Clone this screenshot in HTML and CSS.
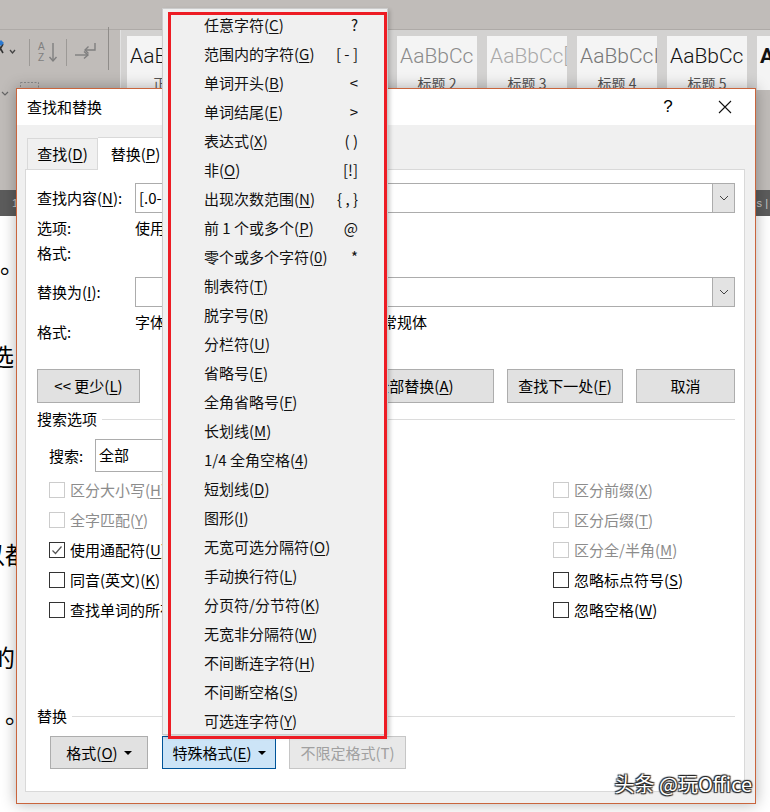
FILE: index.html
```html
<!DOCTYPE html>
<html lang="zh-CN">
<head>
    <meta charset="UTF-8">
    <title>查找和替换</title>
    <link rel="stylesheet" href="styles.css">
</head>
<body>
    <div class="ribbon">
        <div class="ribbon-top"></div>
        <div class="ribbon-body">
            <div class="tools">
                <svg width="120" height="60" viewBox="0 0 120 60">
                    <path d="M-2 14 L3 23 M3 14 L-2 23" stroke="#333" stroke-width="1.6" fill="none"/>
                    <path d="M1 10 L4 13 L1 16 L-2 13 Z" fill="#2b79d0"/>
                    <polyline points="10,20 12.5,23 15,20" stroke="#444" stroke-width="1.3" fill="none"/>
                    <line x1="29.5" y1="9" x2="29.5" y2="36" stroke="#9c9996"/>
                    <text x="38" y="20" font-size="10" fill="#7f7f7f" font-family="Liberation Sans">A</text>
                    <text x="38" y="31" font-size="10" fill="#7f7f7f" font-family="Liberation Sans">Z</text>
                    <line x1="53" y1="13" x2="53" y2="31" stroke="#7f7f7f" stroke-width="1.4"/>
                    <polyline points="49.5,27 53,31 56.5,27" stroke="#7f7f7f" stroke-width="1.4" fill="none"/>
                    <line x1="66.5" y1="9" x2="66.5" y2="36" stroke="#9c9996"/>
                    <line x1="75" y1="25" x2="88" y2="25" stroke="#7f7f7f" stroke-width="1.4"/>
                    <polyline points="84,21.5 88,25 84,28.5" stroke="#7f7f7f" stroke-width="1.4" fill="none"/>
                    <polyline points="95,13 95,20 85,20" stroke="#7f7f7f" stroke-width="1.4" fill="none"/>
                    <polyline points="88.5,16.5 85,20 88.5,23.5" stroke="#7f7f7f" stroke-width="1.4" fill="none"/>
                    <line x1="108.5" y1="-3" x2="108.5" y2="40" stroke="#8f8c89"/>
                    <rect x="20.5" y="52.5" width="18" height="7" stroke="#8a8a8a" stroke-dasharray="2 1.5" fill="none"/>
                </svg>
            </div>
            <div class="gallery">
                <div class="style-box"><span class="sample">AaBbCcDd</span><span class="style-name">正文</span></div>
                <div class="style-box"><span class="sample">AaBbCcDd</span><span class="style-name">无间隔</span></div>
                <div class="style-box"><span class="sample bold">AaBb</span><span class="style-name">标题 1</span></div>
                <div class="style-box"><span class="sample gray">AaBbCc</span><span class="style-name">标题 2</span></div>
                <div class="style-box"><span class="sample light">AaBbCc[</span><span class="style-name">标题 3</span></div>
                <div class="style-box"><span class="sample mid">AaBbCcI</span><span class="style-name">标题 4</span></div>
                <div class="style-box"><span class="sample">AaBbCc</span><span class="style-name">标题 5</span></div>
                <div class="style-box"><span class="sample bold">AaB</span><span class="style-name">标题</span></div>
            </div>
        </div>
    </div>

    <div class="workspace">
        <div class="gray-band">
            <svg class="band-chevron" width="10" height="6" viewBox="0 0 10 6"><polyline points="1,1 4,4 7,1" stroke="#666" stroke-width="1.2" fill="none"/></svg>
        </div>
        <div class="ruler"><span>1:</span><span>s |</span></div>
        <div class="doc">
            <div class="doc-line l1">。</div>
            <div class="doc-line l2">选</div>
            <div class="doc-line l3">以都</div>
            <div class="doc-line l4">的</div>
            <div class="doc-line l5">。</div>
        </div>
    </div>

    <div class="dialog">
        <div class="title-bar">
            <span class="title">查找和替换</span>
            <span class="title-btn">?</span>
            <span class="title-btn">
                <svg width="14" height="14" viewBox="0 0 14 14"><path d="M1 1 L13 13 M13 1 L1 13" stroke="#111" stroke-width="1.1"/></svg>
            </span>
        </div>
        <div class="dialog-body">
            <div class="tabs">
                <div class="tab"><span>查找(<u>D</u>)</span></div>
                <div class="tab active"><span>替换(<u>P</u>)</span></div>
            </div>
            <div class="panel">
                <div class="field-row">
                    <span class="label">查找内容(<u>N</u>):</span>
                    <div class="combo">
                        <span class="combo-text">[.0-9]{1,}</span>
                        <span class="combo-btn"><svg width="10" height="6" viewBox="0 0 10 6"><polyline points="1,1 5,5 9,1" stroke="#444" stroke-width="1" fill="none"/></svg></span>
                    </div>
                </div>
                <div class="info-row first">
                    <span class="label">选项:</span>
                    <span class="value">使用通配符</span>
                </div>
                <div class="info-row">
                    <span class="label">格式:</span>
                </div>
                <div class="field-row replace">
                    <span class="label">替换为(<u>I</u>):</span>
                    <div class="combo">
                        <span class="combo-text"></span>
                        <span class="combo-btn"><svg width="10" height="6" viewBox="0 0 10 6"><polyline points="1,1 5,5 9,1" stroke="#444" stroke-width="1" fill="none"/></svg></span>
                    </div>
                </div>
                <div class="format-row">
                    <span class="label">格式:</span>
                    <span class="value">字体: (中文) +中文正文, 宋体, 加粗, 非常规体</span>
                </div>
                <div class="button-row">
                    <button class="btn less"><span>&lt;&lt; 更少(<u>L</u>)</span></button>
                    <span class="spacer"></span>
                    <button class="btn w-replace"><span>替换(<u>R</u>)</span></button>
                    <button class="btn w-all"><span>全部替换(<u>A</u>)</span></button>
                    <button class="btn w-next"><span>查找下一处(<u>F</u>)</span></button>
                    <button class="btn w-cancel"><span>取消</span></button>
                </div>
                <div class="legend">
                    <span>搜索选项</span>
                    <span class="legend-line"></span>
                </div>
                <div class="search-row">
                    <span class="search-label">搜索:</span>
                    <div class="select">全部</div>
                </div>
                <div class="options">
                    <div class="check disabled"><span class="box"></span><span>区分大小写(<u>H</u>)</span></div>
                    <div class="check disabled"><span class="box"></span><span>区分前缀(<u>X</u>)</span></div>
                    <div class="check disabled"><span class="box"></span><span>全字匹配(<u>Y</u>)</span></div>
                    <div class="check disabled"><span class="box"></span><span>区分后缀(<u>T</u>)</span></div>
                    <div class="check"><span class="box"><svg width="14" height="14" viewBox="0 0 14 14"><polyline points="2.5,7.5 5.5,10.5 11.5,3.5" stroke="#555" stroke-width="1.2" fill="none"/></svg></span><span>使用通配符(<u>U</u>)</span></div>
                    <div class="check disabled"><span class="box"></span><span>区分全/半角(<u>M</u>)</span></div>
                    <div class="check"><span class="box"></span><span>同音(英文)(<u>K</u>)</span></div>
                    <div class="check"><span class="box"></span><span>忽略标点符号(<u>S</u>)</span></div>
                    <div class="check"><span class="box"></span><span>查找单词的所有形式(英文)(<u>W</u>)</span></div>
                    <div class="check"><span class="box"></span><span>忽略空格(<u>W</u>)</span></div>
                </div>
                <div class="legend replace-legend">
                    <span>替换</span>
                    <span class="legend-line"></span>
                </div>
                <div class="bottom-row">
                    <button class="btn b-format"><span>格式(<u>O</u>)</span><span class="caret"></span></button>
                    <button class="btn b-special pressed"><span>特殊格式(<u>E</u>)</span><span class="caret"></span></button>
                    <button class="btn b-none" disabled><span>不限定格式(T)</span></button>
                </div>
            </div>
        </div>
    </div>

    <div class="menu">
        <div class="menu-item"><span>任意字符(<u>C</u>)</span><span>?</span></div>
        <div class="menu-item"><span>范围内的字符(<u>G</u>)</span><span>[ - ]</span></div>
        <div class="menu-item"><span>单词开头(<u>B</u>)</span><span>&lt;</span></div>
        <div class="menu-item"><span>单词结尾(<u>E</u>)</span><span>&gt;</span></div>
        <div class="menu-item"><span>表达式(<u>X</u>)</span><span>( )</span></div>
        <div class="menu-item"><span>非(<u>O</u>)</span><span>[!]</span></div>
        <div class="menu-item"><span>出现次数范围(<u>N</u>)</span><span>{ , }</span></div>
        <div class="menu-item"><span>前 1 个或多个(<u>P</u>)</span><span>@</span></div>
        <div class="menu-item"><span>零个或多个字符(<u>0</u>)</span><span>*</span></div>
        <div class="menu-item"><span>制表符(<u>T</u>)</span></div>
        <div class="menu-item"><span>脱字号(<u>R</u>)</span></div>
        <div class="menu-item"><span>分栏符(<u>U</u>)</span></div>
        <div class="menu-item"><span>省略号(<u>E</u>)</span></div>
        <div class="menu-item"><span>全角省略号(<u>F</u>)</span></div>
        <div class="menu-item"><span>长划线(<u>M</u>)</span></div>
        <div class="menu-item"><span>1/4 全角空格(<u>4</u>)</span></div>
        <div class="menu-item"><span>短划线(<u>D</u>)</span></div>
        <div class="menu-item"><span>图形(<u>I</u>)</span></div>
        <div class="menu-item"><span>无宽可选分隔符(<u>O</u>)</span></div>
        <div class="menu-item"><span>手动换行符(<u>L</u>)</span></div>
        <div class="menu-item"><span>分页符/分节符(<u>K</u>)</span></div>
        <div class="menu-item"><span>无宽非分隔符(<u>W</u>)</span></div>
        <div class="menu-item"><span>不间断连字符(<u>H</u>)</span></div>
        <div class="menu-item"><span>不间断空格(<u>S</u>)</span></div>
        <div class="menu-item"><span>可选连字符(<u>Y</u>)</span></div>
    </div>

    <div class="mark"></div>

    <div class="watermark">头条 @玩Office</div>
</body>
</html>
```

FILE: styles.css
```css
* {
    box-sizing: border-box;
}

body {
    margin: 0;
    width: 770px;
    height: 812px;
    overflow: hidden;
    position: relative;
    background: #fff;
    color: #000;
    font-family: "Noto Sans CJK SC", sans-serif;
    font-size: 15px;
}

u {
    text-decoration-thickness: 1px;
    text-underline-offset: 2px;
}

/* ribbon */
.ribbon {
    height: 90px;
    background: #c0bcb9;
    overflow: hidden;
}

.ribbon-top {
    height: 30px;
    border-bottom: 1px solid #aeaaa7;
}

.ribbon-body {
    display: flex;
    height: 60px;
}

.tools {
    width: 120px;
    flex-shrink: 0;
}

.tools svg {
    display: block;
    overflow: visible;
}

.gallery {
    flex: 1;
    display: flex;
    gap: 10px;
    padding: 6px 0 0 6px;
    background: #d3d2d1;
    border-left: 1px solid #e2e2e2;
    overflow: hidden;
}

.style-box {
    width: 80px;
    height: 60px;
    flex-shrink: 0;
    background: #f4f4f4;
    display: flex;
    flex-direction: column;
    overflow: hidden;
}

.sample {
    padding: 6px 0 0 3px;
    height: 37px;
    font-family: Roboto, "Liberation Sans", sans-serif;
    font-size: 21px;
    font-weight: 300;
    line-height: 28px;
    white-space: nowrap;
    color: #111;
}

.sample.gray {
    color: #8a8a8a;
}

.sample.light {
    color: #a8a8a8;
}

.sample.mid {
    color: #777;
}

.sample.bold {
    font-weight: bold;
}

.style-name {
    text-align: center;
    font-size: 14px;
    line-height: 20px;
    color: #555;
}

/* document behind the dialog */
.workspace {
    display: flex;
    flex-direction: column;
}

.gray-band {
    height: 100px;
    background: #c0bcb9;
}

.band-chevron {
    display: block;
    margin: 1px 0 0 1px;
}

.ruler {
    height: 26px;
    background: #5c5c5c;
    display: flex;
    justify-content: space-between;
    align-items: center;
    padding: 0 2px 0 12px;
    font-family: "Liberation Sans", sans-serif;
    font-size: 11px;
    color: #c8c8c8;
}

.doc {
    font-size: 24px;
    line-height: 26px;
}

.doc-line {
    white-space: nowrap;
}

.l1 { margin-top: 34px; text-indent: 0; }
.l2 { margin-top: 67px; text-indent: -10px; }
.l3 { margin-top: 172px; text-indent: -19px; }
.l4 { margin-top: 77px; text-indent: -9px; }
.l5 { margin-top: 30px; text-indent: 5px; }

/* dialog window */
.dialog {
    position: absolute;
    left: 16px;
    top: 88px;
    width: 740px;
    height: 716px;
    border: 1px solid #c9653d;
    background: #f0f0f0;
    box-shadow: 0 0 14px rgba(0, 0, 0, 0.3);
    display: flex;
    flex-direction: column;
}

.title-bar {
    height: 36px;
    background: #fff;
    display: flex;
    align-items: center;
    padding: 0 7px 0 10px;
}

.title {
    flex: 1;
    line-height: 20px;
}

.title-btn {
    width: 46px;
    height: 36px;
    display: flex;
    align-items: center;
    justify-content: center;
    font-family: "Liberation Sans", sans-serif;
    font-size: 17px;
    margin-left: 11px;
}

.dialog-body {
    flex: 1;
    display: flex;
    flex-direction: column;
    padding: 12px 10px 11px 8px;
}

.tabs {
    height: 32px;
    display: flex;
    align-items: flex-end;
    padding-left: 2px;
}

.tab {
    width: 71px;
    height: 31px;
    border: 1px solid #d9d9d9;
    border-bottom: none;
    display: flex;
    align-items: center;
    justify-content: center;
    line-height: 20px;
}

.tab.active {
    width: 76px;
    height: 33px;
    margin-bottom: -1px;
    background: #fff;
    border-left: none;
    position: relative;
}

.panel {
    flex: 1;
    background: #fff;
    border: 1px solid #d9d9d9;
    padding: 13px 9px 0 11px;
    display: flex;
    flex-direction: column;
}

.label {
    width: 98px;
    flex-shrink: 0;
    line-height: 20px;
}

.field-row {
    height: 30px;
    display: flex;
    align-items: center;
}

.field-row.replace {
    margin-top: 12px;
}

.combo {
    flex: 1;
    height: 30px;
    border: 1px solid #acacac;
    display: flex;
}

.combo-text {
    flex: 1;
    padding-left: 3px;
    line-height: 27px;
}

.combo-btn {
    width: 22px;
    background: #e3e3e3;
    border-left: 1px solid #acacac;
    display: flex;
    align-items: center;
    justify-content: center;
}

.info-row {
    height: 25px;
    display: flex;
    align-items: center;
}

.info-row.first {
    height: 24px;
    margin-top: 3px;
}

.value {
    line-height: 20px;
    white-space: nowrap;
}

.format-row {
    height: 40px;
    display: flex;
    align-items: flex-start;
}

.format-row .label {
    padding-top: 15px;
    line-height: 20px;
    box-sizing: content-box;
}

.format-row .value {
    padding-top: 5px;
}

.btn {
    height: 100%;
    border: 1px solid #adadad;
    background: #e1e1e1;
    font-family: inherit;
    font-size: 15px;
    line-height: 20px;
    color: #000;
    padding: 0;
    display: flex;
    align-items: center;
    justify-content: center;
    gap: 6px;
}

.button-row {
    height: 34px;
    margin-top: 22px;
    display: flex;
    gap: 13px;
}

.spacer {
    flex: 1;
}

.less {
    width: 103px;
}

.w-replace {
    width: 100px;
}

.w-all {
    width: 160px;
}

.w-next {
    width: 116px;
}

.w-cancel {
    width: 99px;
}

.legend {
    height: 20px;
    margin-top: 6px;
    display: flex;
    align-items: center;
    gap: 5px;
    line-height: 20px;
}

.legend-line {
    flex: 1;
    height: 1px;
    background: #dcdcdc;
}

.replace-legend {
    margin-top: 81px;
}

.search-row {
    height: 33px;
    margin-top: 10px;
    padding-left: 12px;
    display: flex;
    align-items: center;
}

.search-label {
    width: 46px;
    line-height: 20px;
}

.select {
    width: 150px;
    height: 33px;
    border: 1px solid #acacac;
    padding-left: 3px;
    line-height: 30px;
}

.options {
    margin-top: 3px;
    padding-left: 12px;
    display: grid;
    grid-template-columns: 504px 1fr;
    grid-auto-rows: 30px;
}

.check {
    display: flex;
    align-items: center;
    gap: 5px;
    line-height: 20px;
    white-space: nowrap;
}

.box {
    width: 16px;
    height: 16px;
    border: 1px solid #333;
    background: #fff;
    display: flex;
    align-items: center;
    justify-content: center;
}

.check.disabled {
    color: #8c8c8c;
}

.check.disabled .box {
    border-color: #cccccc;
}

.bottom-row {
    height: 33px;
    margin-top: 10px;
    padding-left: 13px;
    display: flex;
}

.b-format {
    width: 98px;
}

.b-special {
    width: 114px;
    margin-left: 14px;
}

.b-none {
    width: 117px;
    margin-left: 13px;
}

.btn.pressed {
    background: #cce4f7;
    border-color: #005499;
}

.btn:disabled {
    background: #e8e8e8;
    border-color: #c6c6c6;
    color: #a0a0a0;
}

.caret {
    width: 0;
    height: 0;
    border-left: 4px solid transparent;
    border-right: 4px solid transparent;
    border-top: 4px solid #000;
}

/* special characters popup */
.menu {
    position: absolute;
    left: 162px;
    top: 8px;
    width: 226px;
    height: 727px;
    background: #f0f0f0;
    border: 1px solid #cccccc;
    box-shadow: 2px 2px 4px rgba(0, 0, 0, 0.2);
    padding-top: 1px;
}

.menu-item {
    height: 29px;
    display: flex;
    justify-content: space-between;
    align-items: center;
    padding: 0 29px 0 41px;
    line-height: 20px;
    white-space: nowrap;
    color: #111;
}

.mark {
    position: absolute;
    left: 168px;
    top: 12px;
    width: 219px;
    height: 727px;
    border: 3px solid #ed1c24;
}

.watermark {
    position: absolute;
    right: 18px;
    top: 771px;
    font-size: 20px;
    line-height: 26px;
    color: #fff;
    text-shadow: 1px 1px 1px #222, -1px -1px 1px #222, 1px -1px 1px #222, -1px 1px 1px #222;
}
```
